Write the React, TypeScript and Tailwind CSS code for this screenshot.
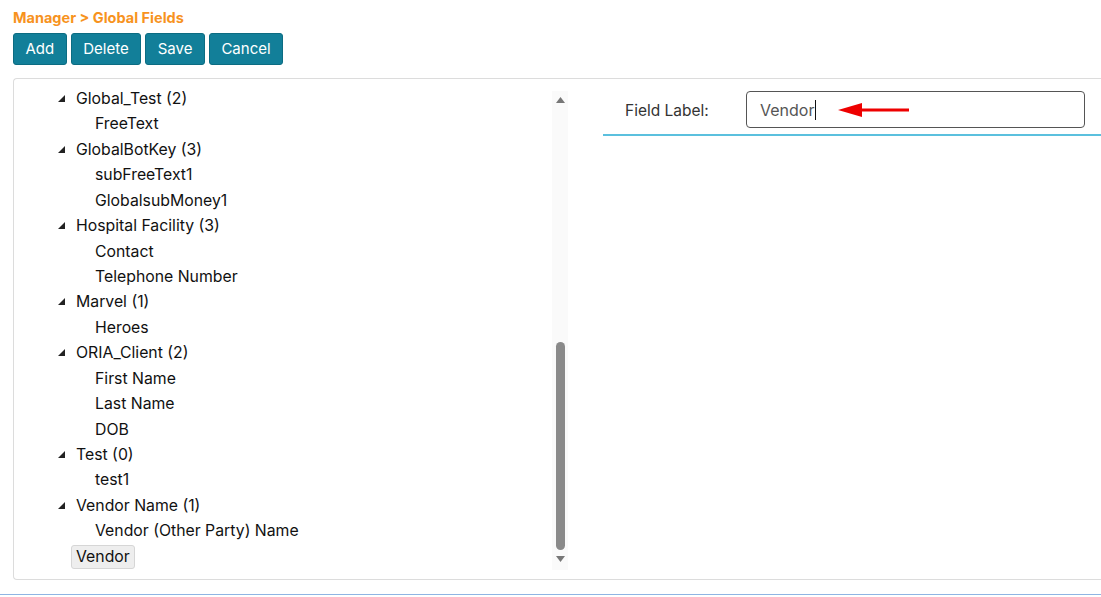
import React from "react";

type Row = { label: string; depth: 0 | 1; selected?: boolean };

const rows: Row[] = [
  { label: "Global_Test (2)", depth: 0 },
  { label: "FreeText", depth: 1 },
  { label: "GlobalBotKey (3)", depth: 0 },
  { label: "subFreeText1", depth: 1 },
  { label: "GlobalsubMoney1", depth: 1 },
  { label: "Hospital Facility (3)", depth: 0 },
  { label: "Contact", depth: 1 },
  { label: "Telephone Number", depth: 1 },
  { label: "Marvel (1)", depth: 0 },
  { label: "Heroes", depth: 1 },
  { label: "ORIA_Client (2)", depth: 0 },
  { label: "First Name", depth: 1 },
  { label: "Last Name", depth: 1 },
  { label: "DOB", depth: 1 },
  { label: "Test (0)", depth: 0 },
  { label: "test1", depth: 1 },
  { label: "Vendor Name (1)", depth: 0 },
  { label: "Vendor (Other Party) Name", depth: 1 },
  { label: "Vendor", depth: 0, selected: true },
];

function Triangle() {
  return (
    <svg width="7" height="7" viewBox="0 0 7 7" className="block">
      <polygon points="7,0 7,7 0,7" fill="#222" />
    </svg>
  );
}

function TreeRow({ row }: { row: Row }) {
  if (row.selected) {
    return (
      <div className="flex h-[25.45px] items-center pl-[57px]">
        <span className="rounded-[3px] border border-[#d6d6d6] bg-[#eeeeee] px-[4px] leading-[22px]">
          {row.label}
        </span>
      </div>
    );
  }
  if (row.depth === 0) {
    return (
      <div className="flex h-[25.45px] items-center">
        <span className="flex w-[62px] justify-end pr-[11px] pb-[1px]">
          <Triangle />
        </span>
        <span>{row.label}</span>
      </div>
    );
  }
  return (
    <div className="flex h-[25.45px] items-center pl-[81px]">
      <span>{row.label}</span>
    </div>
  );
}

function Scrollbar() {
  return (
    <div className="mt-[12px] mb-[9px] flex w-[16px] flex-col items-center bg-[#fafafa]">
      <svg width="9" height="6" viewBox="0 0 9 6" className="mt-[6px]">
        <polygon points="4.5,0 9,6 0,6" fill="#777" />
      </svg>
      <div className="flex-1" />
      <div className="h-[208px] w-[9px] rounded-full bg-[#8a8a8a]" />
      <svg width="9" height="6" viewBox="0 0 9 6" className="mt-[6px] mb-[8px]">
        <polygon points="0,0 9,0 4.5,6" fill="#777" />
      </svg>
    </div>
  );
}

export default function App() {
  return (
    <div
      className="h-[597px] w-[1101px] overflow-hidden bg-white text-[15.8px] text-[#111]"
      style={{ fontFamily: "Inter, 'Liberation Sans', sans-serif" }}
    >
      <div className="pl-[13px] pt-[8px] text-[14.5px] font-bold leading-[20px] text-[#f7931e]">
        Manager &gt; Global Fields
      </div>
      <div className="mt-[5px] flex gap-[4px] pl-[13px]">
        {["Add", "Delete", "Save", "Cancel"].map((b) => (
          <button
            key={b}
            type="button"
            className="h-[32px] rounded-[3px] border border-[#0c6c82] bg-[#127f99] px-[11.5px] text-[15px] font-normal text-white"
          >
            {b}
          </button>
        ))}
      </div>

      <div className="ml-[13px] mt-[13px] flex h-[502px] rounded-l-[4px] border-y border-l border-[#dcdcdc]">
        <div className="flex w-[554px]">
          <div className="flex-1 pt-[7px]">
            {rows.map((r) => (
              <TreeRow key={r.label + r.depth} row={r} />
            ))}
          </div>
          <Scrollbar />
        </div>

        <div className="ml-[35px] flex-1">
          <div className="flex items-center pt-[12px]">
            <label className="w-[143px] pl-[22px] pt-[2px] text-[15.5px] text-[#333]">Field Label:</label>
            <div className="relative flex h-[37px] w-[339px] items-center rounded-[4px] border border-[#555] pl-[13px] text-[16px] text-[#555]">
              <span>Vendor</span>
              <span className="ml-[1px] h-[20px] w-px bg-[#111]" />
              <svg
                width="72"
                height="16"
                viewBox="0 0 72 16"
                className="absolute left-[91px] top-[10px]"
              >
                <polygon points="0,8 24,1 24,15" fill="#ee0000" />
                <rect x="20" y="6.5" width="51" height="3" fill="#ee0000" />
              </svg>
            </div>
          </div>
          <div className="mt-[6px] h-[2px] bg-[#5bc0de]" />
        </div>
      </div>

      <div className="mt-[14px] h-px bg-[#8fb5e3]" />
    </div>
  );
}
